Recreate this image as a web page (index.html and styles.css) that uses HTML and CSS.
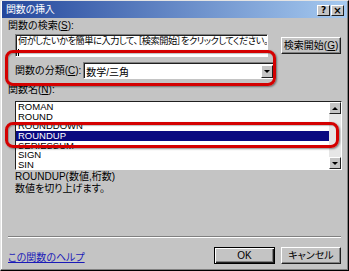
FILE: index.html
```html
<!DOCTYPE html>
<html lang="ja">
<head>
    <meta charset="UTF-8">
    <title>関数の挿入</title>
    <link rel="stylesheet" href="styles.css">
</head>
<body>
    <div class="dialog">
        <div class="titlebar">
            <span class="title">関数の挿入</span>
            <div class="caption-buttons">
                <span class="cap-btn">?</span>
                <span class="cap-btn cap-close">×</span>
            </div>
        </div>
        <div class="content">
            <div class="label">関数の検索(<u>S</u>):</div>
            <div class="search-row">
                <div class="search-box">
                    <div class="search-line">何がしたいかを簡単に入力して、［検索開始］をクリックしてください。</div>
                    <div class="search-line"><span class="caret"></span></div>
                </div>
                <div class="btn search-btn">検索開始(<u>G</u>)</div>
            </div>
            <div class="category-row">
                <span class="label">関数の分類(<u>C</u>):</span>
                <div class="combo">
                    <span class="combo-text">数学/三角</span>
                    <span class="combo-arrow"><span class="tri-down"></span></span>
                </div>
            </div>
            <div class="label name-label">関数名(<u>N</u>):</div>
            <div class="listbox">
                <div class="list-items">
                    <div class="item">ROMAN</div>
                    <div class="item">ROUND</div>
                    <div class="item">ROUNDDOWN</div>
                    <div class="item selected">ROUNDUP</div>
                    <div class="item">SERIESSUM</div>
                    <div class="item">SIGN</div>
                    <div class="item">SIN</div>
                </div>
                <div class="scrollbar">
                    <span class="scroll-btn"><span class="tri-up"></span></span>
                    <span class="scroll-track"></span>
                    <span class="scroll-btn"><span class="tri-down"></span></span>
                </div>
            </div>
            <div class="description">
                <div>ROUNDUP(数値,桁数)</div>
                <div>数値を切り上げます。</div>
            </div>
            <div class="separator"></div>
            <div class="footer-row">
                <span class="help-link">この関数のヘルプ</span>
                <div class="btn ok-btn">OK</div>
                <div class="btn cancel-btn">キャンセル</div>
            </div>
        </div>
        <div class="mark mark-category"></div>
        <div class="mark mark-selected"></div>
    </div>
</body>
</html>
```

FILE: styles.css
```css
:root {
    --face: #c4c4c4;
    --shadow: #808080;
    --dark: #202020;
    --light: #ffffff;
    --mark: #d40000;
}
body {
    margin: 0;
    padding: 0;
    font-family: "Liberation Sans", "Noto Sans CJK JP", sans-serif;
    font-size: 10px;
    font-feature-settings: "palt";
    color: #000;
    background: var(--face);
}
u {
    text-decoration: underline;
}
.dialog {
    position: relative;
    width: 349px;
    height: 271px;
    box-sizing: border-box;
    background: var(--face);
    border: 1px solid;
    border-color: #e4e4e4 #000 #000 #e4e4e4;
    box-shadow: inset -1px -1px 0 var(--shadow), inset 1px 1px 0 var(--light);
    overflow: hidden;
}
.titlebar {
    height: 17px;
    margin: 0 1px;
    padding: 0 3px 0 4px;
    display: flex;
    align-items: center;
    justify-content: space-between;
    background: linear-gradient(to right, #24479c, #a6caf0);
    color: #fff;
}
.title {
    font-size: 10px;
    line-height: 17px;
    letter-spacing: -0.2px;
}
.caption-buttons {
    display: flex;
    gap: 1px;
    padding-top: 1px;
}
.cap-btn {
    width: 13px;
    height: 11px;
    box-sizing: border-box;
    background: var(--face);
    border: 1px solid;
    border-color: var(--light) var(--dark) var(--dark) var(--light);
    color: #000;
    font-family: "DejaVu Sans", sans-serif;
    font-weight: bold;
    font-size: 9px;
    line-height: 9px;
    text-align: center;
}
.cap-close {
    font-size: 10px;
}
.content {
    padding: 0 7px;
}
.label {
    line-height: 12px;
    white-space: nowrap;
}
.content > .label:first-child {
    margin-top: 2px;
}
.search-row {
    display: flex;
    align-items: flex-start;
    margin-top: 2px;
}
.search-box {
    margin-left: 7px;
    width: 254px;
    height: 23px;
    box-sizing: border-box;
    background: #fff;
    border: 1px solid;
    border-color: var(--shadow) var(--light) var(--light) var(--shadow);
    box-shadow: inset 1px 1px 0 var(--dark);
    padding: 1px 0 0 2px;
    overflow: hidden;
}
.search-line {
    font-size: 9.2px;
    line-height: 11px;
    height: 11px;
    white-space: nowrap;
    letter-spacing: -0.45px;
}
.caret {
    display: inline-block;
    width: 1px;
    height: 8px;
    background: #000;
    vertical-align: middle;
}
.btn {
    box-sizing: border-box;
    height: 17px;
    background: var(--face);
    border: 1px solid;
    border-color: var(--light) var(--dark) var(--dark) var(--light);
    box-shadow: inset -1px -1px 0 var(--shadow);
    text-align: center;
    line-height: 15px;
    white-space: nowrap;
}
.search-btn {
    width: 60px;
    margin-left: 13px;
    margin-top: 3px;
}
.category-row {
    display: flex;
    align-items: center;
    margin-top: 5px;
    padding-left: 7px;
}
.combo {
    margin-left: 2px;
    width: 192px;
    height: 17px;
    box-sizing: border-box;
    background: #fff;
    border: 1px solid;
    border-color: var(--shadow) var(--light) var(--light) var(--shadow);
    box-shadow: inset 1px 1px 0 var(--dark);
    display: flex;
    align-items: center;
    justify-content: space-between;
    padding: 1px 1px 0 2px;
}
.combo-arrow {
    width: 12px;
    height: 13px;
    box-sizing: border-box;
    background: var(--face);
    border: 1px solid;
    border-color: var(--light) var(--dark) var(--dark) var(--light);
    display: flex;
    align-items: center;
    justify-content: center;
}
.tri-down {
    width: 0;
    height: 0;
    border-left: 3px solid transparent;
    border-right: 3px solid transparent;
    border-top: 3px solid #000;
}
.tri-up {
    width: 0;
    height: 0;
    border-left: 3px solid transparent;
    border-right: 3px solid transparent;
    border-bottom: 3px solid #000;
}
.name-label {
    margin-top: 5px;
}
.listbox {
    margin: 5px 0 0 7px;
    width: 327px;
    height: 69px;
    box-sizing: border-box;
    background: #fff;
    border: 1px solid;
    border-color: var(--dark) var(--light) var(--light) var(--dark);
    display: flex;
    overflow: hidden;
}
.list-items {
    flex: 1;
    font-size: 9.5px;
}
.item {
    height: 9.7px;
    line-height: 9.7px;
    padding-left: 2px;
    white-space: nowrap;
}
.item.selected {
    background: #0a0a80;
    color: #fff;
}
.scrollbar {
    width: 12px;
    display: flex;
    flex-direction: column;
}
.scroll-btn {
    height: 12px;
    box-sizing: border-box;
    background: var(--face);
    border: 1px solid;
    border-color: var(--light) var(--dark) var(--dark) var(--light);
    display: flex;
    align-items: center;
    justify-content: center;
}
.scroll-track {
    flex: 1;
    background: #e6e6e6;
}
.description {
    padding-left: 7px;
    line-height: 12px;
    margin-top: 1px;
}
.separator {
    margin-top: 41px;
    height: 0;
    border-top: 1px solid var(--shadow);
    border-bottom: 1px solid var(--light);
}
.footer-row {
    display: flex;
    align-items: center;
    margin-top: 9px;
}
.help-link {
    color: #1a1ab8;
    text-decoration: underline;
    margin-right: auto;
    margin-top: 2px;
}
.ok-btn {
    width: 61px;
    border-color: #000;
    box-shadow: inset 1px 1px 0 var(--light), inset -1px -1px 0 var(--dark), inset -2px -2px 0 var(--shadow);
}
.cancel-btn {
    width: 60px;
    margin-left: 6px;
}
.mark {
    position: absolute;
    box-sizing: border-box;
    border: 3px solid var(--mark);
    border-radius: 8px;
    box-shadow: 1px 1px 2px rgba(0, 0, 0, 0.45), inset 1px 1px 1px rgba(0, 0, 0, 0.25);
}
.mark-category {
    left: 4px;
    top: 49px;
    width: 271px;
    height: 36px;
}
.mark-selected {
    left: 4px;
    top: 121px;
    width: 334px;
    height: 26px;
}
```
